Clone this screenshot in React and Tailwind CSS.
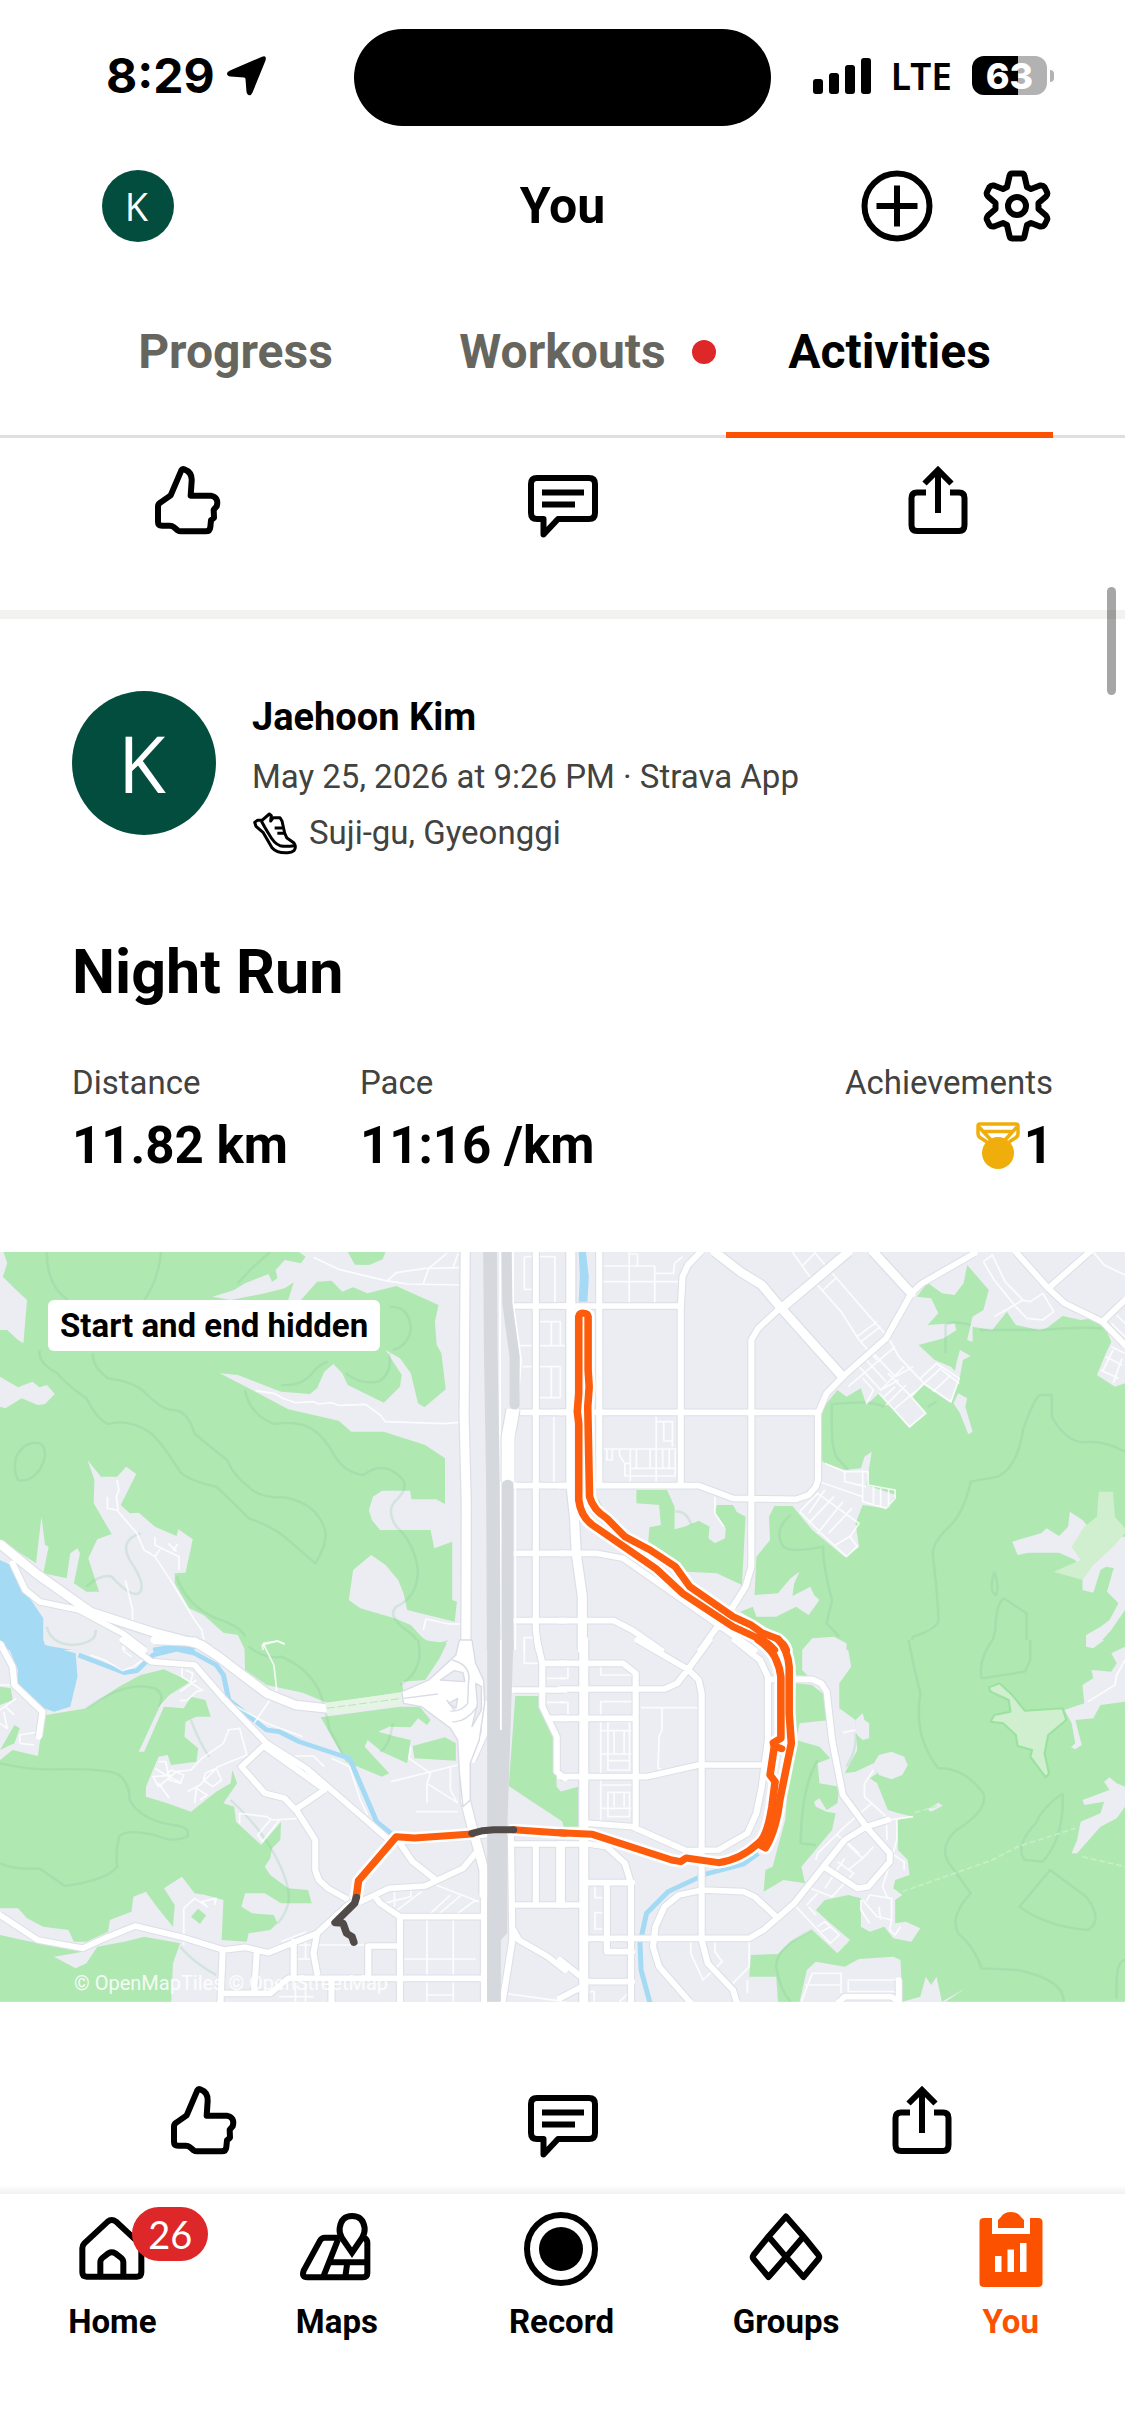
import clsx from 'clsx';

const TABS = [
  { id: 'progress', label: 'Progress' },
  { id: 'workouts', label: 'Workouts', dot: true },
  { id: 'activities', label: 'Activities', active: true },
];

const STATS = [
  { label: 'Distance', value: '11.82 km' },
  { label: 'Pace', value: '11:16 /km' },
];

const NAV = [
  { label: 'Home', icon: HomeIcon, badge: 26 },
  { label: 'Maps', icon: MapsIcon },
  { label: 'Record', icon: RecordIcon },
  { label: 'Groups', icon: GroupsIcon },
  { label: 'You', icon: YouIcon, active: true },
];

// Each tile has its own 1568 x 1200 grid, neighbours overlap by a few pixels
const TILES = [
  {
    id: 'nw',
    transform: 'translate(0 -2) scale(0.36033 0.33333)',
    parks: [
      'M10 6L20 40L8 80L40 115L75 150L65 280L50 270L20 240H0V380L50 412L90 395L110 412L130 405L152 432L125 462L105 465L60 445L15 475L0 470V870L100 940L115 800L125 885L135 890L120 970L185 985L195 910L215 895L222 910L205 1000L240 1025L275 1025L245 925L270 868L310 852L260 760L262 690L243 630L280 680L325 680L350 650L378 672L335 765L360 790L385 788L430 830L490 858L495 838L535 868L515 968L485 970L485 1000L525 1075L565 1095L620 1148L660 1155L680 1200H1215L1245 1170L1200 1185L1170 1160L1140 1125L1095 1105L1000 1075L968 1050L980 960L1030 915L1070 945L1105 990L1120 1030L1130 1080L1262 1115L1268 1055L1255 1050V875L1205 895L1195 840H1055L1032 810L1024 780L1035 740L1060 722H1138L1142 748H1210L1235 762V625L1180 585L1065 545H975L940 512L800 478L700 420L610 370L660 375L780 425L860 432L880 415L900 365L925 342L950 370L965 405L1065 458L1110 410L1115 375L1070 300L1110 325L1140 370L1160 460L1178 472L1237 418L1225 310L1212 285L1207 215L1217 165L1100 108L1020 130L980 112L950 125L920 92L880 95L835 150H800L815 97L790 115L735 130L640 150L590 140L650 120L680 100L745 72L755 95L770 85L765 60L790 30L835 40L848 20L830 6Z',
      'M965 6H1070L1062 28L1025 45L985 44Z',
    ],
    clearings: [],
    meadows: [],
    lakes: ['M0 930L30 945L80 1040L120 1105V1185L200 1200H0Z'],
    rivers: ['M425 1200L490 1188L540 1200'],
    contours:
      'M130 6Q130 110 190 150M447 6Q440 90 400 150M750 6Q700 50 660 100M110 300Q105 340 160 370Q180 400 240 445Q270 510 300 522Q360 505 420 550Q450 580 500 665Q520 690 600 710Q650 760 690 805Q760 830 800 870L875 940Q910 880 902 840Q880 760 790 742Q720 745 690 710Q650 680 630 630Q560 570 540 550Q520 480 480 480Q450 480 400 425Q370 395 300 385Q255 350 258 310M680 420Q690 490 760 522Q830 510 870 540Q900 560 930 620Q960 670 1010 675Q1060 630 1110 680Q1140 710 1100 750Q1070 780 1100 830Q1150 880 1160 960Q1160 1040 1100 1070Q1070 1100 1140 1150Q1170 1180 1165 1200M780 405Q840 410 870 365Q890 340 910 335M960 370Q1000 405 1050 395Q1090 370 1080 310M1080 170Q1140 170 1140 240Q1130 290 1090 300M45 620Q70 570 110 580Q140 600 110 660Q80 700 50 690Q35 660 45 620M390 850Q330 870 360 930Q410 1010 385 1030Q360 1040 310 980Q280 970 240 1010M130 1130Q140 1180 200 1185Q270 1180 265 1140M490 980Q520 1070 600 1105Q670 1130 680 1160',
    highways: 'M0 882L100 970L250 1085L420 1145L560 1185L580 1200M1291 6L1288 500L1294 760L1293 1200',
    roads:
      'M35 940L70 1020L110 1055L220 1080L340 1150L400 1200M1487 6V1140L1495 1200M1425 168H1568M1425 487H1568M1425 707H1568M1425 910H1568M1425 1112H1568',
    paths:
      'M870 22L940 58L1070 92L1130 102L1280 105M1075 92L1100 68L1180 55L1280 53M1175 100L1190 55L1240 10M1257 53L1272 10M710 422L760 430L785 445L820 458L870 455L885 462L920 458L940 466L1015 463L1055 495L1070 515L1230 521L1275 517M325 690L330 720L323 740L328 785L380 850L400 900L430 920L470 985L540 1110L560 1140L570 1190M298 740V775L325 780M430 860V885L497 920V960M430 920L447 893M467 880L490 905M480 903L493 882M348 990L368 1080V1110M350 1150L340 1200M1455 20H1540V160M1455 20V118H1478M1495 215H1555V285M1530 215V285M1440 287H1568M1450 350H1555V443H1495M1530 350V443M1537 500V700M1175 1140L1182 1107L1245 1122H1290M730 1200L728 1185L770 1173L790 1183M1455 1200V1163H1485',
  },
  {
    id: 'ne',
    transform: 'translate(560 -2) scale(0.36033 0.33333)',
    parks: [
      'M1145 230L1200 240L1240 185L1265 225L1330 240L1350 235L1395 198L1445 210L1480 205L1510 225L1530 275L1515 310L1490 375L1540 410L1568 400V1200H795V1180L760 1160L700 1165L672 1200H630L600 1150L500 1085L535 1070L545 1100L600 1100L655 1070L690 1095L720 1050L705 1035L695 1010L645 1038L650 1000L665 965L640 985L605 1030L540 1035L545 920L583 870L580 800L595 768H645L700 840L790 920L830 890L820 820L840 765L905 775L932 735L850 705L857 660L865 605L845 620L835 655L790 660L735 640L725 630V480L770 420L795 440L835 415L850 465L885 430L970 535L1015 490L975 440L1010 405L1085 460L1110 380L1085 350L1040 330L995 285L1065 265L1100 240L1095 220L1020 225L1050 190L1030 145L990 140L1020 98L1060 130L1095 135L1120 100L1130 45L1190 120L1175 180L1145 200L1130 270L1145 275Z',
      'M212 720H297L318 770V838L345 830L385 812L415 830L412 865L430 880L458 865L460 835L430 790L435 765L480 765L490 785L515 800L505 1005L435 970L350 965L245 875L248 832L280 825L275 765L212 760Z',
      'M105 745L130 795L110 785Z',
    ],
    clearings: [
      'M1100 340L1110 300L1140 318L1118 330L1110 380L1095 370ZM1105 430L1130 445L1125 470L1145 545L1133 553L1110 490L1092 460Z',
      'M1255 875L1335 850L1350 835L1385 858L1410 830L1415 785L1450 810L1490 860L1568 860V960L1515 950L1500 960L1480 1028L1450 1020V970L1430 930L1385 908H1300L1270 915Z',
      'M1568 905L1550 925L1535 960L1518 1025L1550 1060L1525 1110L1500 1130L1460 1155V1200H1480L1530 1140L1568 1080Z',
    ],
    meadows: [{ d: 'M1495 725H1535L1540 800L1568 835V850L1540 885L1480 945L1450 990L1370 965L1445 930L1420 890L1455 830L1490 800Z' }],
    lakes: ['M52 6H72L80 80L76 155H52L55 80Z'],
    rivers: [],
    contours:
      'M1165 240H1340Q1440 230 1510 235M1330 435H1365V500Q1400 570 1450 577Q1510 570 1568 605M1330 435Q1310 460 1285 540Q1270 650 1215 680L1140 695Q1120 790 1080 830Q1030 880 1035 920Q1050 1050 1050 1115Q1040 1140 980 1160L968 1200M1205 965Q1190 1030 1210 1035Q1220 1010 1205 965M1232 1045Q1210 1060 1208 1140L1195 1200M1232 1045L1295 1090V1200M640 795Q590 840 620 890Q640 910 730 890Q730 950 755 1050L740 1120L775 1160M755 460Q750 600 770 625L800 660M760 462Q860 450 900 470M1020 470L1045 455M1070 310V225Q1090 210 1140 225M320 785Q350 780 365 825',
    highways: 'M430 6L500 65L560 105L610 170L780 375M800 6L620 170M870 6L975 130M30 6V700L40 800L45 910L62 1040V1200',
    roads:
      'M109 6V700M335 700V180L340 80L355 45L390 6M480 1070L515 1010L531 950V270L550 235L620 165M0 168H335M0 487H715M0 707H385L480 745L655 748L690 735L710 710L716 690V490L740 430L790 375L905 265L975 130L1005 100L1150 10M1265 6L1355 115L1400 160L1505 215L1568 285M1355 115L1470 6M1505 215L1568 150M0 910H100L175 925L440 1125L540 1200M0 1112H150L200 1140L280 1200M440 1125L390 1200',
    paths:
      'M192 6V160M263 48V160M115 48H263M115 95H330M263 70H315L318 40L340 20M192 12H215V48M645 6L690 75L780 185L830 270L880 330M705 6L740 50L860 200L910 260L940 320L1010 400M672 48L705 12M730 120L765 85M825 260L880 215M835 275L890 230M267 500V695M267 515H312V590M288 515V573H310M120 597H330M195 597V695M212 597V655M250 597V655M285 597V655M303 597V655M320 597V678H180V640H195M195 655H330M130 597V630H145V597M165 597V615L178 638M800 410L930 290M885 430L970 530L1015 490L975 440L1010 400L1085 455L1108 385L1045 340L1000 385M910 370L975 440M830 350L890 420L955 350M850 330L905 395M870 310L930 380L980 350M905 465L960 405M925 480L985 425M890 420L940 390M895 445L930 410M1010 400L1060 352M1035 425L1085 375M1060 360L1108 400M850 460L870 420L840 385M735 640L790 665H855V705L930 720V745L905 775L840 755M790 665V695L850 710M840 660V755M720 695L840 740M665 785L715 730L830 820L805 860L825 890L795 920L730 855L665 785M690 820L760 740M715 850L785 755M745 850L810 775M765 885L810 855M735 720L690 790M870 710V765M890 715V770M912 718V772M1175 35L1200 15L1235 95L1285 150L1205 200M1175 35L1205 90L1265 170L1295 205L1340 210L1370 185L1340 130L1305 155L1280 150M1480 6L1510 45L1568 75M1530 290L1568 310M1515 320L1560 345M1500 360L1550 385M1535 300L1505 365M1560 325L1535 400M1530 220L1568 260M1545 195L1568 220M430 740V790L455 830',
  },
  {
    id: 'sw',
    transform: 'translate(0 388) scale(0.36033 0.33333)',
    parks: [
      'M0 140L30 145L35 180L0 195Z',
      'M128 225L240 205L330 140L390 105L455 88L528 125L470 165L445 195L385 335L400 335L455 200L510 205L530 170L570 180L585 230H545L515 245L512 290L550 325L545 365L475 375L465 345L440 350L405 440V470L465 490L530 515L600 455L640 430L645 390L658 430L620 490L650 500L655 545L725 615L780 545L778 600L755 625L750 655L735 680L750 705L800 745L855 750L865 790H780L735 760L680 760L670 800L700 820L760 825L770 850L750 870L690 880L685 905L615 900L620 780L570 765L540 760L505 710L455 745L485 795L480 860L435 800L405 755L370 770L365 815L305 840L300 875L240 905H205L190 870L120 860L75 835L50 805H0V360L35 330L105 348L110 310Z',
      'M0 885L105 910L230 935L150 950L210 985L240 970L270 920L345 905L400 890L500 910L480 970L475 1085H0Z',
      'M530 830L550 806L572 826L555 852Z',
      'M678 0H1175L1240 10L1220 55L1180 120L1115 125L1120 155L910 190L840 158L740 135L680 90Z',
      'M890 232L1110 200L1165 200L1195 240L1185 255L1160 235L1140 262L1080 260L1050 275L1100 290L1140 300L1130 370L1060 335L1020 300L1012 320L1080 400L1060 410L960 365Z',
      'M1145 318L1235 292L1265 310V362L1150 355Z',
      'M1430 168H1495L1500 205L1540 300L1545 440L1568 470V550L1470 480L1412 438Z',
      'M0 330L40 255L55 265L40 310Z',
    ],
    clearings: [],
    meadows: [],
    lakes: ['M15 0H120L125 15L210 40L215 110L195 200L150 215L110 200L45 130L50 90Z'],
    rivers: ['M218 45L345 98L380 92L425 45L490 28L540 40L600 75L620 105L635 180L740 270L775 275L830 305L970 355L1045 545L1085 580'],
    contours:
      'M0 370Q80 390 150 388Q300 385 330 405Q360 430 360 480Q390 540 480 555Q530 560 520 590Q480 610 430 585Q350 565 330 590Q320 640 325 680Q300 720 180 738L110 685Q40 690 0 670M240 205Q350 120 430 145Q460 165 440 200M1160 0Q1180 90 1110 135M690 20Q740 60 780 50Q850 80 885 150Q900 190 915 270L950 340M1090 250Q1080 320 1055 335M640 480Q720 560 760 640Q810 740 800 790Q790 830 770 850M500 920Q540 970 600 1005M530 240Q550 300 580 350',
    highways: 'M430 0L540 5L600 45L740 160L820 195L905 205M1291 360V480L1310 560L1343 690V765',
    roads:
      'M340 0L420 65L540 75L620 175L740 310L850 385L1000 525L1075 595M740 310L670 380L735 460L790 475L825 515L875 600V690L885 720L910 745L960 775M825 505L900 450M740 325L890 440M1000 785L1080 745L1180 738L1285 685L1320 640M1110 610L1145 665L1210 720M0 825L105 900L230 925L290 895L375 858L500 890L620 930L680 922L745 938L880 880L960 800L985 780L990 720L1090 600M618 930L612 1085M713 930L705 1060M618 1060H750L800 1015H1340M815 905V1010M880 880L870 940L880 1000M1022 1005V918H1110M1110 1085V830H1340M1110 830L1055 790L1045 775M920 1085V1020M1343 760V1085M1490 0L1505 70V200L1545 290V395L1568 415M1425 150H1568M1505 70H1568M1520 235H1568M1425 612H1568M1487 612V795M1552 612V795M1425 795H1568M1425 870L1440 900L1520 950L1568 990M0 10L35 80L40 135L118 215L108 290M1095 605L1300 590L1425 575L1568 585M1418 590L1422 900L1400 1050L1395 1085M1345 190V280L1312 360',
    paths:
      'M730 10L760 75L768 150L705 250M730 10L770 3L790 12M640 190L740 250L840 290M630 270L665 265L685 345L605 380L555 435L520 455M635 270L620 310L560 355L530 390L490 395L440 440L425 410L480 405M430 385L460 405L505 430M440 430L470 475M440 365H460L470 420L500 430L510 405L475 390L455 410M570 400L600 385L615 420L590 440L565 420ZM540 490L545 445L575 465L555 480M820 348H870L900 380M920 355L970 380L1000 480L1020 525M1085 425L1270 375M1140 320L1135 355L1195 400L1185 430V490M1185 430L1265 485M1155 515H1270M1250 380V450L1270 490M510 915V805L540 775L575 800L560 785L600 775L595 795M665 550V520L740 530L755 540L830 535M775 540L728 605L715 585L750 540M1185 840V1085M1258 840V1085M1115 957H1320M1185 1065H1258M800 915H1020M848 905V960M815 957H870M775 1070H870M820 1015V1085M848 1015V1085M1090 820L1170 755M1195 820L1250 765M1220 820L1280 765M1270 820L1320 780M1210 735L1330 785M1065 790L1140 770V750M1095 755V800M0 210L45 175M15 200L40 225M10 215L20 265L0 250M55 310V285L110 275M55 310L95 315M0 135H40M250 45L290 60L340 92L370 80L395 60M345 20V35L365 50M505 80V110L560 150M500 155L545 120M515 90L535 100L530 125M500 182L520 180L545 155L565 150M780 905L850 875M1455 0V70H1500M1510 115H1568M1505 187H1568M1400 1060L1568 1085',
  },
  {
    id: 'se',
    transform: 'translate(560 388) scale(0.36033 0.33333)',
    parks: [
      'M795 0H1568V1085H1070L1125 1045L1060 1085L1045 1010L1030 1035L1015 1010L1000 1070L950 1085L945 960L925 950L830 957L790 980L710 965L685 990L665 1085H605L600 1010H525L530 945L605 942L640 905L700 870L770 940L805 900L740 840L710 810L735 780L800 765L835 775V860L860 875L900 860L925 895L975 905L1000 865L960 845L930 850V780L950 765L925 745L930 720L970 705L965 660L938 630L935 540L980 530L940 520L910 510L880 430L860 415L880 400L870 370L820 395L790 400L825 330L820 240L775 205V130L808 80Z',
      'M655 130L700 135L740 170L750 240L665 250L655 300L720 320L750 355L715 370L720 430L775 440L770 490L740 510L720 475L705 485L710 500L740 515L765 520L755 570L670 680L680 730L620 720L565 755L570 690L590 680L610 600L625 540Z',
      'M630 0H672V90L690 110L655 105Z',
      'M0 455L50 440V560H10L0 520Z',
    ],
    clearings: [
      'M868 375L885 345L920 335L955 350L965 375L950 405L920 418L885 405Z',
      'M820 240L840 220L845 240L858 250V295L840 300L820 280Z',
      'M1020 508L1050 488L1062 497L1030 515Z',
      'M1568 20L1530 40L1545 70L1530 95L1475 90L1480 115L1450 135L1455 190L1400 210L1420 250L1430 310L1418 322L1430 328L1448 315L1430 240L1480 235L1500 195L1568 185Z',
      'M1460 0H1510L1480 25L1460 20Z',
      'M1568 440L1545 430L1525 412L1510 425L1525 450L1450 480L1455 495L1510 485L1500 520L1445 545L1435 600L1420 640L1435 640L1500 560L1545 535L1568 500Z',
    ],
    meadows: [
      {
        d: 'M1190 142L1220 130L1255 165L1290 212L1395 205L1405 240L1355 285L1345 340L1357 400L1348 412L1305 350L1310 330L1270 318L1265 285L1230 250L1195 245L1205 225L1250 215L1245 180L1195 155Z',
        hedge: true,
      },
    ],
    lakes: [],
    rivers: ['M550 640L510 672L405 702L300 755L240 820L222 910L225 990L250 1090'],
    contours:
      'M968 0Q975 50 1000 160Q980 290 1050 385Q1120 380 1175 460Q1190 510 1100 570Q1050 620 1080 670L1140 760Q1080 830 1105 880Q1150 920 1170 985L1270 990Q1400 1020 1398 1085M1200 0Q1160 60 1170 115L1290 95L1305 60V0M1395 460Q1340 500 1320 550Q1260 620 1290 660L1340 665Q1400 590 1395 460M1360 690L1275 800Q1350 860 1465 870Q1510 840 1460 770ZM1568 960Q1540 960 1545 1075M715 360Q670 440 668 610L710 615M700 870Q600 920 600 980Q610 1050 640 1085M820 280Q825 330 795 380',
    highways: 'M66 0V560M66 600V1085',
    roads:
      'M215 0L355 88L385 120L393 160V900L410 970L480 1050L490 1085M415 0L355 88L325 130L290 147H0M0 70H175L210 100V565M0 235H205M0 410H240L385 375H570M485 0L555 60L577 110V300L560 440L545 520L520 580L440 630L350 632L200 560L80 550M577 118H600M655 118H700L725 130L740 155L755 300L785 465L850 560L915 640V665L855 740L825 745L735 682M910 540L850 560L790 600L650 790L565 870L525 895H80M600 830L540 770L510 755L395 750L330 765L290 800L265 860L258 920L275 980L360 1085M80 612L130 620L180 670L197 730V1085M80 728H200M130 735V935H200M0 795H65M5 612V795M0 612H66M0 960L70 1020M0 1075L70 1035M80 1025H200M775 1085L790 1070H920L940 1085M940 1020V1085',
    paths:
      'M0 115H22V80M0 187H22V225M113 80V105H200M225 203H385M283 203V270L275 290L272 385L283 390M113 545V185H205M113 272H200M113 342H200M133 245H193V390H133ZM150 272V342M178 272V342M133 362H193M113 435H200M133 457H193V530H133ZM150 457V500M178 457V500M113 505H200M97 740V773H118M118 818H97V867H118M363 905V940L397 1020L450 965L430 935V905M525 905V980L480 1030M520 1020V1060M655 800L750 910L775 885L735 845L715 860M725 875L750 860M695 745L755 770L815 700L770 665M710 660L715 640L790 560L865 490M770 585L840 655L800 690M840 655L870 620M800 610L830 640M735 745L790 655M685 795L715 760M690 800L710 825M845 470V430L870 390M845 470L905 530L908 600M935 535V600L910 690L895 740L910 775M920 640L955 665V690M910 540L980 530M840 780L880 830L920 840V775L860 765L850 785M835 780V810L860 850M885 800L890 840M920 840L915 870L930 885L945 860M680 1035H780V1000H700L670 1085M780 1035V1060M800 1060V1020H940M800 1055H930M1465 185L1540 135L1545 105L1568 60M785 278L820 270M75 1055H95V1085M165 1085L195 1055',
  },
];

const TRAILS = 'M985 518L1055 495M950 755L1200 660L1270 620L1430 565M1450 650L1568 680';

const ROUTE = {
  nw: [],
  ne: [
    'M595 1200Q575 1175 550 1165L480 1130L340 1030L265 955L90 825Q58 800 52 750V520L48 485L52 430V200Q54 189 62 189Q77 189 78 200V360L81 410L77 470L82 740Q92 780 130 805L180 860L250 900L320 950L360 1010L480 1100L530 1125L560 1148L600 1165Q622 1180 628 1200',
  ],
  sw: ['M1568 580L1425 569', 'M1310 582L1150 594L1100 590L995 722L989 770'],
  se: [
    'M550 0Q590 30 600 60Q611 85 613 110V295L592 308L595 318L615 326',
    'M595 318L583 405L597 425L588 500Q575 590 550 610Q500 660 440 668L350 654L335 665L310 660L90 583L0 578',
    'M605 -3Q632 30 636 80V220L642 310L610 480Q600 570 570 624L550 612',
  ],
};

// The part of the run that is only visible to its owner
const HIDDEN_ROUTE = ['M1425 569H1370L1340 572L1310 580', 'M989 772L984 790L930 848L952 850L962 880L977 890L982 907'];

export default function App() {
  return (
    <div className="relative flex min-h-screen flex-col bg-white font-['Roboto',sans-serif] text-black">
      <StatusBar />
      <Header />
      <Tabs />

      <main className="flex-1">
        <Actions className="border-b-9 border-[#f2f2f0] pt-[25px] pb-[75px]" />
        <Activity />
      </main>

      <BottomNav />

      {/* Scroll indicator */}
      <div className="absolute top-[587px] right-[9px] h-[108px] w-[9px] rounded-full bg-black/35" />
    </div>
  );
}

function StatusBar() {
  return (
    <div className="grid grid-cols-[1fr_auto_1fr] items-center pt-[29px] font-['Inter',sans-serif]">
      <div className="flex items-center gap-3 pb-1 pl-[106px]">
        <span className="text-[48px] leading-none font-bold">8:29</span>
        <svg viewBox="0 0 40 40" className="size-10">
          <path d="M35 0.800Q40 -1 38.500 4.500L25.500 36.500Q24 40 21.500 39Q20 38.500 19.500 36L18.500 23Q18.500 21.500 17 21.500L3.500 20.500Q0 20 0 17.500Q0 16 3 14.500Z" />
        </svg>
      </div>
      <div className="h-[97px] w-[417px] rounded-full bg-black" />
      <div className="flex items-center justify-end gap-5 pr-[71px] pb-1">
        <svg viewBox="0 0 58 36" className="h-9 w-[58px]">
          <rect x="0" y="21" width="10" height="15" rx="3" />
          <rect x="16" y="15" width="10" height="21" rx="3" />
          <rect x="32" y="7" width="10" height="29" rx="3" />
          <rect x="48" y="0" width="10" height="36" rx="3" />
        </svg>
        <span className="font-['Noto_Sans',sans-serif] text-[37px] leading-none font-semibold">LTE</span>
        <div className="flex items-center gap-[3px]">
          <div className="flex h-[39px] w-[75px] items-center justify-center rounded-xl bg-linear-to-r from-black from-62% to-[#b2b2b2] to-62% text-[36px] leading-none font-extrabold text-white">
            63
          </div>
          <div className="h-3 w-1 rounded-r-full bg-[#b2b2b2]" />
        </div>
      </div>
    </div>
  );
}

function Header() {
  return (
    <header className="grid grid-cols-[1fr_auto_1fr] items-center px-[72px] pt-11">
      <button aria-label="Profile" className="ml-[30px] flex size-[72px] items-center justify-center rounded-full bg-[#024d3e] text-white">
        <span className="pr-[3px] font-['Open_Sans',sans-serif] text-[38px] leading-none font-medium">K</span>
      </button>
      <h1 className="text-[50px] leading-[60px] font-bold">You</h1>
      <div className="flex justify-end gap-12">
        <button aria-label="Add">
          <svg viewBox="0 0 72 72" fill="none" stroke="currentColor" strokeWidth="6" className="size-[72px]">
            <circle cx="36" cy="36" r="32.500" />
            <path d="M36 15.500V56.500M15.500 36H56.500" />
          </svg>
        </button>
        <button aria-label="Settings">
          <svg viewBox="-36 -36 72 72" fill="none" stroke="currentColor" strokeWidth="6" strokeLinejoin="round" className="size-[72px]">
            <path d="M-5 -32.500H5Q7 -32.500 7.500 -30L10 -19L14 -17L23 -20.500Q26 -21 27.500 -19L30 -14Q31 -12 29 -9.500L21.500 -3V3L29 9.500Q31 12 30 14L27.500 19Q26 21 23 20.500L14 17L10 19L7.500 30Q7 32.500 5 32.500H-5Q-7 32.500 -7.500 30L-10 19L-14 17L-23 20.500Q-26 21 -27.500 19L-30 14Q-31 12 -29 9.500L-21.500 3V-3L-29 -9.500Q-31 -12 -30 -14L-27.500 -19Q-26 -21 -23 -20.500L-14 -17L-10 -19L-7.500 -30Q-7 -32.500 -5 -32.500Z" />
            <circle r="9" />
          </svg>
        </button>
      </div>
    </header>
  );
}

function Tabs() {
  return (
    <div role="tablist" className="grid grid-cols-3 px-[72px] shadow-[inset_0_-3px_0_#dfdfdf]">
      {TABS.map(({ id, label, dot, active }) => (
        <button
          key={id}
          role="tab"
          aria-selected={Boolean(active)}
          className={clsx(
            'border-b-6 pt-[86px] pb-14 text-[48px] leading-[48px] font-bold',
            active ? 'border-[#fc5200]' : 'border-transparent text-[#66665f]',
          )}
        >
          <span className="relative">
            {label}
            {dot && <span className="absolute top-1/2 left-full ml-[26px] size-6 -translate-y-1/2 rounded-full bg-[#de2728]" />}
          </span>
        </button>
      ))}
    </div>
  );
}

function Activity() {
  return (
    <article>
      <div className="px-[72px] pt-[72px] pb-[76px]">
        {/* Athlete */}
        <div className="flex gap-9">
          <div className="flex size-36 items-center justify-center rounded-full bg-[#024d3e] text-white">
            <span className="pr-1 font-['Open_Sans',sans-serif] text-[78px] leading-none font-medium">K</span>
          </div>
          <div className="pt-1 text-[33px] leading-[56px] text-[#42423f]">
            <p className="mb-[10px] text-[38px] leading-[44px] font-bold text-black">Jaehoon Kim</p>
            <p>May 25, 2026 at 9:26 PM · Strava App</p>
            <p className="flex items-center gap-[9px]">
              <ShoeIcon />
              Suji-gu, Gyeonggi
            </p>
          </div>
        </div>

        <h2 className="mt-[75px] text-[61px] leading-[72px] font-bold">Night Run</h2>

        {/* Stats */}
        <dl className="mt-[55px] flex gap-[72px]">
          {STATS.map(({ label, value }) => (
            <div key={label}>
              <dt className="text-[33px] leading-[40px] text-[#42423f]">{label}</dt>
              <dd className="mt-[13px] text-[51px] leading-[60px] font-bold">{value}</dd>
            </div>
          ))}
          <div className="ml-auto">
            <dt className="text-[33px] leading-[40px] text-[#42423f]">Achievements</dt>
            <dd className="mt-[13px] flex items-center justify-end gap-1 text-[51px] leading-[60px] font-bold">
              <MedalIcon />1
            </dd>
          </div>
        </dl>
      </div>

      <RouteMap />
      <Actions className="px-6 pt-[81px] pb-[30px]" />
      <div className="h-[9px] bg-linear-to-b from-white to-[#f1f1f1]" />
    </article>
  );
}

function RouteMap() {
  return (
    <div className="relative">
      <svg viewBox="0 0 1125 750" className="block w-full bg-[#ebedf3]" fill="none" strokeLinejoin="round">
        {/* Land and water */}
        {TILES.map((tile) => (
          <g key={tile.id} transform={tile.transform}>
            {tile.parks.map((d) => <path key={d} d={d} fill="#b0e8b2" />)}
            {tile.clearings.map((d) => <path key={d} d={d} fill="#ebedf3" />)}
            {tile.meadows.map(({ d, hedge }) => <path key={d} d={d} fill="#cfefce" stroke={hedge ? '#9be2a0' : 'none'} strokeWidth="6" />)}
            {tile.lakes.map((d) => <path key={d} d={d} fill="#a4daf4" />)}
            <path d={tile.contours} stroke="#7fbf95" strokeOpacity="0.22" strokeWidth="7" />
            {tile.rivers.map((d) => <path key={d} d={d} stroke="#a4daf4" strokeWidth="14" />)}
          </g>
        ))}

        {/* Roads */}
        {TILES.map((tile) => (
          <g key={tile.id} transform={tile.transform}>
            <path d={tile.paths} stroke="#fff" strokeOpacity="0.8" strokeWidth="5" />
            <path d={tile.roads} stroke="#dcdfe6" strokeWidth="23" />
            <path d={tile.highways} stroke="#dcdfe6" strokeWidth="32" />
          </g>
        ))}
        {TILES.map((tile) => (
          <g key={tile.id} transform={tile.transform} stroke="#fff" strokeLinecap="round">
            <path d={tile.roads} strokeWidth="17" />
            <path d={tile.highways} strokeWidth="25" />
          </g>
        ))}

        {/* Railway */}
        <g transform={TILES[0].transform}>
          <path d="M1388 6V1200M1424 6V160L1446 330L1430 560V1200" stroke="#fff" strokeWidth="5" />
          <path d="M1360 6L1362 300L1368 700L1370 1200" stroke="#d5d9dd" strokeWidth="38" />
          <path d="M1406 6L1408 160L1428 320V465" stroke="#d5d9dd" strokeWidth="28" strokeLinecap="round" />
          <path d="M1424 478L1410 560V695" stroke="#d9dce4" strokeWidth="42" />
          <path d="M1424 478L1410 560V695" stroke="#fff" strokeWidth="36" />
          <path d="M1409 705V1200" stroke="#d5d9dd" strokeWidth="32" strokeLinecap="round" />
        </g>

        {/* Interchange */}
        <g transform={TILES[2].transform}>
          <path d="M905 205L1115 175" stroke="#e4f5e3" strokeWidth="34" />
          <path d="M907 205L1115 175" stroke="#c9d8cd" strokeWidth="3" strokeDasharray="22 8" />
          <path
            d="M1115 155L1190 120L1265 45L1275 0H1310L1320 70L1342 120L1345 190L1330 300L1305 370V480L1285 500L1275 400L1270 300L1250 265L1170 200L1120 190Z"
            fill="#fff"
            stroke="#d9dce4"
            strokeWidth="4"
          />
          <path d="M1222 120L1260 92L1285 98L1290 125ZM1245 190L1270 175L1265 205ZM1320 130L1336 140V210L1310 260L1325 190Z" fill="#ebedf3" stroke="#d9dce4" strokeWidth="4" />
          <path d="M1255 60Q1310 75 1300 130L1298 190Q1280 215 1250 213M1120 175L1215 162M1255 245Q1290 250 1325 200M1240 180L1262 212" stroke="#d9dce4" strokeWidth="4" />
          <path d="M1352 0H1425L1408 560V880L1390 900V1085H1352Z" fill="#d5d9dd" />
          <path d="M1390 0V270" stroke="#fff" strokeWidth="5" />
        </g>

        <path transform={TILES[3].transform} d={TRAILS} stroke="#c6efc6" strokeWidth="5" strokeDasharray="16 8" />

        {/* Run */}
        <g stroke="#fff" strokeWidth="36" strokeLinecap="round">
          {TILES.map((tile) => (
            <g key={tile.id} transform={tile.transform}>
              {ROUTE[tile.id].map((d) => <path key={d} d={d} />)}
            </g>
          ))}
        </g>
        <g stroke="#fc5c0c" strokeWidth="21" strokeLinecap="round">
          {TILES.map((tile) => (
            <g key={tile.id} transform={tile.transform}>
              {ROUTE[tile.id].map((d) => <path key={d} d={d} />)}
            </g>
          ))}
        </g>
        <g transform={TILES[2].transform} stroke="#504b48" strokeWidth="21" strokeLinecap="round">
          {HIDDEN_ROUTE.map((d) => <path key={d} d={d} />)}
        </g>
      </svg>

      <span className="absolute top-12 left-12 rounded-md bg-white px-3 py-[5px] text-[33px] leading-[41px] font-bold">
        Start and end hidden
      </span>
      <small className="absolute bottom-[7px] left-[74px] text-[20px] leading-6 text-white/85">© OpenMapTiles © OpenStreetMap</small>
    </div>
  );
}

function Actions({ className }) {
  return (
    <div className={clsx('grid grid-cols-3 justify-items-center', className)}>
      <button aria-label="Give kudos">
        <svg viewBox="36 38 216 216" fill="none" stroke="currentColor" strokeWidth="18" strokeLinejoin="round" className="size-[72px] overflow-visible">
          <path d="M124 60Q127 55 133 57Q157 66 155 92L152 136H212Q238 141 230 168L221 178L222 202L213 210L211 230Q210 243 197 243H123Q117 243 113 240L101 230Q96 226 90 226H66Q54 226 54 215V169Q54 161 61 157L92 135Z" />
        </svg>
      </button>
      <button aria-label="Comment">
        <svg viewBox="0 0 72 72" fill="none" stroke="currentColor" strokeWidth="6" strokeLinejoin="round" className="size-[72px] overflow-visible">
          <path d="M31 56H62Q68 56 68 50V21Q68 15 62 15H10Q4 15 4 21V50Q4 56 10 56H16.500V71.500Z" />
          <path d="M15 29.500H57M15 41.500H48" />
        </svg>
      </button>
      <button aria-label="Share">
        <svg viewBox="0 0 72 72" fill="none" stroke="currentColor" strokeWidth="6" className="size-[72px] overflow-visible">
          <path d="M24 29.500H15Q9.500 29.500 9.500 35V62Q9.500 68 15 68H57Q62.500 68 62.500 62V35Q62.500 29.500 57 29.500H48" />
          <path d="M36 50V8M22.500 20.500L36 7L49.500 20.500" />
        </svg>
      </button>
    </div>
  );
}

function BottomNav() {
  return (
    <nav className="grid grid-cols-5 bg-white pt-[15px] pr-[2px] pb-[94px]">
      {NAV.map(({ label, icon: Icon, badge, active }) => (
        <a
          key={label}
          href={`#${label.toLowerCase()}`}
          className={clsx('flex flex-col items-center gap-[18px] text-[33px] leading-[40px] font-bold', active && 'text-[#fc5200]')}
        >
          <span className="relative">
            <Icon />
            {badge && (
              <span className="absolute -top-[5px] left-14 rounded-full bg-[#de2728] px-4 font-['Lato',sans-serif] text-[38px] leading-[54px] font-normal text-white">
                {badge}
              </span>
            )}
          </span>
          {label}
        </a>
      ))}
    </nav>
  );
}

function HomeIcon() {
  return (
    <svg viewBox="107 60 216 216" fill="none" stroke="currentColor" strokeWidth="18" className="size-[72px]">
      <path d="M126 168Q126 160 132 154L202 89Q214 79 227 89L297 154Q303 160 303 168V241Q303 254 290 254H139Q126 254 126 241Z" />
      <path d="M180 252V211Q180 203 186 198L204 184Q214 178 225 184L243 198Q249 203 249 211V252" />
    </svg>
  );
}

function MapsIcon() {
  return (
    <svg viewBox="784 60 216 216" fill="none" stroke="currentColor" strokeWidth="18" strokeLinejoin="round" className="size-[72px] overflow-visible">
      <path d="M900 137H855Q846 137 841 146L792 236Q785 256 803 256H970Q983 256 983 243V152Q983 144 975 138" />
      <path d="M895 143L851 254M872 211H983M923 211L917 254" />
      <path d="M937 182L907 138Q898 124 900 108Q905 72 937 72Q970 72 975 108Q976 124 967 138Z" fill="#fff" strokeLinejoin="miter" />
    </svg>
  );
}

function RecordIcon() {
  return (
    <svg viewBox="0 0 72 72" fill="currentColor" className="size-[72px] overflow-visible">
      <circle cx="36" cy="37" r="34" fill="none" stroke="currentColor" strokeWidth="6" />
      <circle cx="36" cy="37" r="22" />
    </svg>
  );
}

function GroupsIcon() {
  return (
    <svg viewBox="0 0 72 72" fill="none" stroke="currentColor" strokeWidth="6" strokeLinejoin="round" className="size-[72px] overflow-visible">
      <path d="M36 4.500L53.500 24.500L36 45L18.500 24.500ZM18.500 24.500L3.500 43Q2 45 3.500 47L18.500 65L36 45M53.500 24.500L68.500 43Q70 45 68.500 47L53.500 65L36 45" />
    </svg>
  );
}

function YouIcon() {
  return (
    <svg viewBox="0 0 72 72" fill="currentColor" className="size-[72px] overflow-visible">
      <path d="M9 6H17V22H55V6H63Q67.500 6 67.500 10V71Q67.500 75 63 75H9Q4.500 75 4.500 71V10Q4.500 6 9 6Z" />
      <path d="M23 16V8Q25 6 26 5Q29 0 36 0T46 5Q47 6 49 8V16Z" />
      <path d="M20 44H26.500V60H20ZM32.500 37.500H39V60H32.500ZM45 31H51.500V60H45Z" fill="#fff" />
    </svg>
  );
}

function ShoeIcon() {
  return (
    <svg viewBox="66 62 144 132" fill="none" stroke="#000" strokeWidth="9" strokeLinejoin="round" className="h-11 w-12">
      <path d="M74 96L82 90L96 90L118 71L124 76L122 92L130 82H150L156 92L164 128L170 142L192 158Q200 170 192 181Q184 188 170 187Q140 188 126 172L106 138L99 126L78 108Z" />
      <path d="M94 92L104 110L116 130Q132 160 150 166Q168 170 192 166M134 113H158M142 129H164" />
    </svg>
  );
}

function MedalIcon() {
  return (
    <svg viewBox="0 0 44 48" fill="none" stroke="#efae0b" strokeWidth="3.500" strokeLinejoin="round" className="h-12 w-11">
      <path d="M11 20L4 15.500Q2 14 2 12V4Q2 2 4 2H40Q42 2 42 4V12Q42 14 40 15.500L33 20" />
      <path d="M3 5L15 18M41 5L29 18M7 9.500H37" />
      <circle cx="22" cy="31" r="16" fill="#efae0b" stroke="none" />
    </svg>
  );
}
